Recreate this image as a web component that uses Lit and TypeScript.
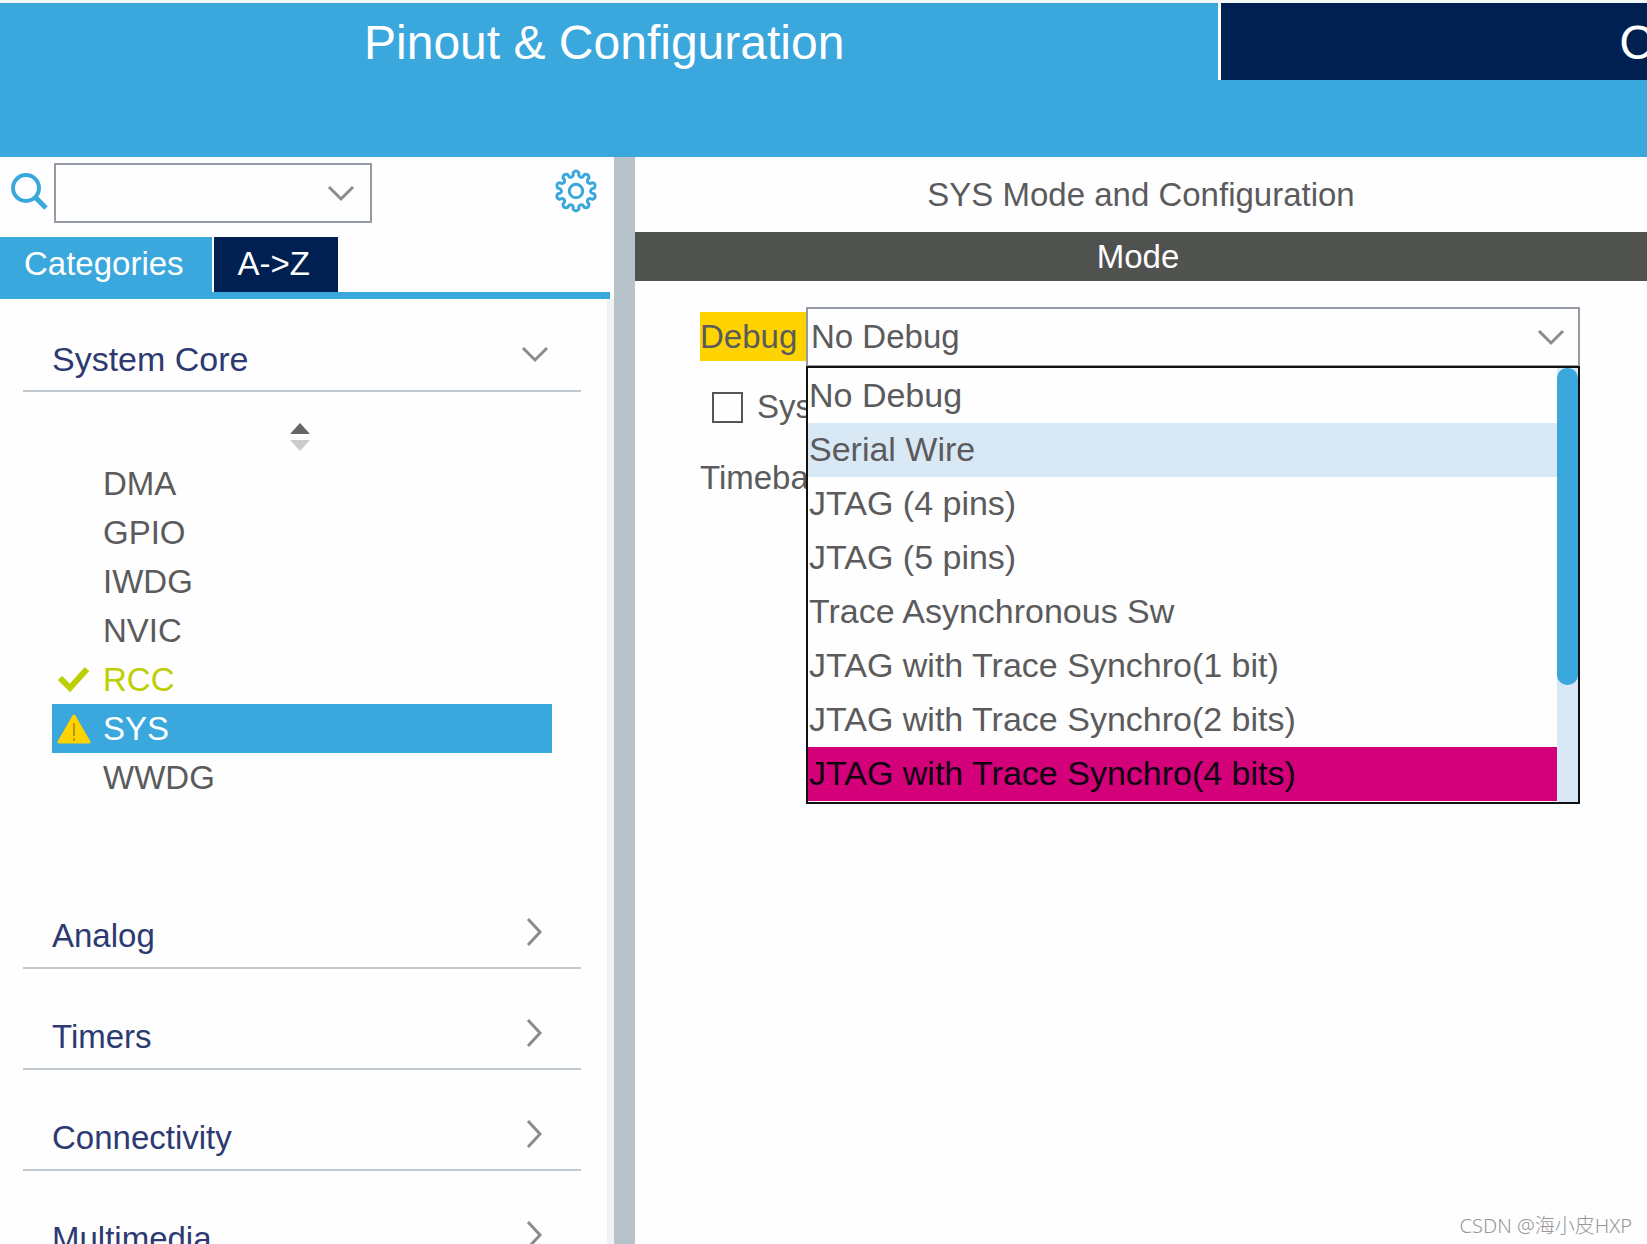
import { LitElement, html, css, svg, nothing } from "lit";
import { customElement, state } from "lit/decorators.js";
import { classMap } from "lit/directives/class-map.js";

type Peripheral = { name: string; status?: "ok" | "warning" };

const PERIPHERALS: Peripheral[] = [
  { name: "DMA" },
  { name: "GPIO" },
  { name: "IWDG" },
  { name: "NVIC" },
  { name: "RCC", status: "ok" },
  { name: "SYS", status: "warning" },
  { name: "WWDG" },
];

const GROUPS = ["Analog", "Timers", "Connectivity", "Multimedia"];

const DEBUG_MODES = [
  "No Debug",
  "Serial Wire",
  "JTAG (4 pins)",
  "JTAG (5 pins)",
  "Trace Asynchronous Sw",
  "JTAG with Trace Synchro(1 bit)",
  "JTAG with Trace Synchro(2 bits)",
  "JTAG with Trace Synchro(4 bits)",
];

const HOVERED_MODE = "Serial Wire";
const CONFLICT_MODE = "JTAG with Trace Synchro(4 bits)";

/** Outline of a cog with the given number of teeth, centred on 22,22. */
function cogPath(teeth: number): string {
  const step = (Math.PI * 2) / teeth;
  const at = (radius: number, angle: number) =>
    `${(22 + radius * Math.sin(angle)).toFixed(2)} ${(22 - radius * Math.cos(angle)).toFixed(2)}`;
  let d = "";
  for (let i = 0; i < teeth; i++) {
    const a = i * step;
    d += `${i ? "L" : "M"}${at(18.6, a - step * 0.24)}`;
    d += `Q${at(21.6, a)} ${at(18.6, a + step * 0.24)}`;
    d += `L${at(16, a + step * 0.28)}`;
    d += `Q${at(13.2, a + step * 0.5)} ${at(16, a + step * 0.72)}`;
  }
  return d + "Z";
}

const chevronDown = svg`<path d="M2 2 L14 14 L26 2" />`;
const chevronRight = svg`<path d="M2 2 L14 15 L2 28" />`;

@customElement("app-root")
export class AppRoot extends LitElement {
  @state() private selected = "SYS";
  @state() private mode = DEBUG_MODES[0];

  static styles = css`
    :host {
      display: block;
      font-family: "Liberation Sans", Arial, sans-serif;
      font-size: 33px;
      color: #5b5b5d;
      background: #fefefe;
    }
    * {
      box-sizing: border-box;
    }
    button,
    select {
      font: inherit;
      color: inherit;
      border: 0;
      margin: 0;
      padding: 0;
      background: none;
      border-radius: 0;
      text-align: left;
    }
    ul {
      list-style: none;
      margin: 0;
      padding: 0;
    }
    h1,
    h2 {
      margin: 0;
      font-size: inherit;
      font-weight: 400;
    }
    svg {
      display: block;
      fill: none;
    }
    .page {
      position: relative;
      display: flex;
      flex-direction: column;
      height: 100vh;
      overflow: hidden;
    }
    .header {
      flex: none;
      padding-bottom: 77px;
      background: #3aa8dc;
      border-top: 3px solid #f3f8fb;
    }
    .main-tabs {
      display: flex;
    }
    .main-tab {
      flex: 1218 1 0;
      min-width: 0;
      height: 77px;
      padding: 2px 10px 0 0;
      overflow: hidden;
      font-size: 48px;
      line-height: 75px;
      text-align: center;
      white-space: nowrap;
      color: #ffffff;
    }
    .main-tab.dark {
      flex-grow: 429;
      padding-right: 0;
      text-align: right;
      background: #002052;
      border-left: 3px solid #ffffff;
    }
    .cut {
      display: block;
      margin-right: -7px;
    }
    .body {
      flex: 1;
      min-height: 0;
      display: grid;
      grid-template-columns: minmax(0, 614fr) 21px minmax(0, 1012fr);
    }
    .splitter {
      background: #b7c3ca;
    }
    .side {
      display: flex;
      flex-direction: column;
      min-height: 0;
      overflow: hidden;
    }
    .search {
      flex: none;
      display: flex;
      align-items: center;
      height: 80px;
      padding: 0 16px 12px 10px;
    }
    .lens {
      flex: none;
      width: 38px;
      height: 38px;
      margin-right: 6px;
      stroke: #3aa8dc;
      stroke-width: 4;
    }
    .combo {
      display: grid;
      align-items: center;
    }
    .combo > * {
      grid-area: 1 / 1;
    }
    .combo select {
      appearance: none;
      width: 100%;
      height: 60px;
      padding: 0 0 2px 3px;
      border: 2px solid #959ba2;
      background: #fefefe;
    }
    .combo svg {
      justify-self: end;
      pointer-events: none;
    }
    .search .combo {
      flex: 0 1 318px;
      min-width: 0;
      padding-top: 4px;
    }
    .chevron {
      stroke: #8b8b8b;
      stroke-width: 3;
    }
    .search .combo svg {
      margin-right: 17px;
    }
    .gear {
      margin-left: auto;
      stroke: #3aa8dc;
      stroke-width: 3;
      stroke-linejoin: round;
    }
    .side-tabs {
      flex: none;
      display: flex;
      gap: 2px;
      height: 62px;
      margin-right: 4px;
      border-bottom: 7px solid #3aa8dc;
    }
    .side-tab {
      padding: 0 28px 2px 24px;
      color: #ffffff;
      background: #3aa8dc;
      white-space: nowrap;
    }
    .side-tab.dark {
      background: #002052;
    }
    .tree {
      flex: 1;
      min-height: 0;
      overflow: hidden;
      padding: 15px 26px 0 23px;
      border-right: 7px solid #f0f2f4;
    }
    .group {
      display: flex;
      align-items: flex-end;
      justify-content: space-between;
      width: 100%;
      height: 78px;
      padding: 0 32px 12px 29px;
      font-size: 34px;
      line-height: 38px;
      color: #2d3a72;
      border-bottom: 2px solid #bfc9cf;
    }
    .group.next {
      height: 101px;
      font-size: 33px;
    }
    .group .chevron {
      margin-bottom: 15px;
    }
    .group.next .chevron {
      margin: 0 6px 8px 0;
    }
    .sorter {
      display: block;
      margin: 31px auto 8px 266px;
    }
    .items {
      margin: 0 29px 66px 29px;
    }
    .item {
      display: grid;
      grid-template-columns: 51px 1fr;
      align-items: center;
      width: 100%;
      height: 49px;
    }
    .item svg {
      margin-left: 5px;
    }
    .item.ok {
      color: #bccf00;
    }
    .item.selected {
      color: #ffffff;
      background: #3aa8dc;
    }
    .title {
      height: 75px;
      line-height: 75px;
      text-align: center;
    }
    .mode-bar {
      height: 49px;
      padding-right: 6px;
      line-height: 49px;
      text-align: center;
      color: #ffffff;
      background: #50524f;
    }
    .form {
      padding: 26px 67px 0 65px;
    }
    .field {
      position: relative;
      display: flex;
      align-items: center;
    }
    .debug-label {
      flex: none;
      width: 106px;
      line-height: 49px;
      margin-bottom: 2px;
      background: #ffd300;
    }
    .field .combo {
      flex: 1;
      min-width: 0;
    }
    .field .combo svg {
      margin-right: 15px;
    }
    .popup {
      position: absolute;
      top: 59px;
      left: 106px;
      right: 0;
      display: flex;
      background: #fefefe;
      border: 2px solid #111111;
      z-index: 1;
    }
    .options {
      flex: 1;
      min-width: 0;
      padding: 1px 0;
      font-size: 34px;
    }
    .option {
      display: block;
      width: 100%;
      height: 54px;
      padding: 0 0 1px 1px;
      white-space: nowrap;
      overflow: hidden;
    }
    .option.hovered {
      background: #d9e8f5;
    }
    .option.conflict {
      color: #0d0010;
      background: #d4007a;
    }
    .track {
      flex: none;
      width: 21px;
      background: #d9e8f5;
    }
    .thumb {
      height: 73%;
      border-radius: 10px;
      background: #3aa8dc;
    }
    .check-row {
      display: flex;
      align-items: center;
      gap: 14px;
      padding: 20px 0 0 12px;
      line-height: 40px;
    }
    .check-row input {
      appearance: none;
      width: 31px;
      height: 31px;
      margin: 0;
      border: 2px solid #555555;
      background: #fefefe;
    }
    .timebase {
      padding-top: 31px;
      line-height: 40px;
    }
    .watermark {
      position: absolute;
      right: 15px;
      bottom: 4px;
      font-family: "Noto Sans", "Noto Sans CJK SC", sans-serif;
      font-size: 20px;
      font-weight: 300;
      line-height: 28px;
      color: #979797;
    }
  `;

  private statusIcon(p: Peripheral) {
    if (p.status === "ok") {
      return html`<svg width="33" height="28" viewBox="0 0 33 28" aria-hidden="true">
        <path d="M3 12 L13 22 L30 3" stroke="#bccf00" stroke-width="6" />
      </svg>`;
    }
    if (p.status === "warning") {
      return html`<svg width="34" height="30" viewBox="0 0 34 30" aria-hidden="true">
        <path d="M17 2 L32 28 H2 Z" fill="#ffd300" stroke="#ffd300" stroke-width="3" stroke-linejoin="round" />
        <path d="M17 9 V22 M17 24 V27" stroke="#b8961a" stroke-width="2" />
      </svg>`;
    }
    return html`<span></span>`;
  }

  render() {
    return html`
      <div class="page">
        <header class="header">
          <nav class="main-tabs">
            <button class="main-tab">Pinout &amp; Configuration</button>
            <button class="main-tab dark"><span class="cut">C</span></button>
          </nav>
        </header>
        <div class="body">
          <aside class="side">
            <div class="search">
              <svg class="lens" viewBox="0 0 38 38" aria-hidden="true">
                <circle cx="16" cy="16" r="13" />
                <path d="M25 25 L36 36" stroke-width="5" />
              </svg>
              <div class="combo">
                <select aria-label="Search"><option></option></select>
                <svg class="chevron" width="28" height="17" viewBox="0 0 28 17">${chevronDown}</svg>
              </div>
              <button class="gear" aria-label="Settings">
                <svg width="44" height="44" viewBox="0 0 44 44">
                  <path d=${cogPath(10)} />
                  <circle cx="22" cy="22" r="6.7" />
                </svg>
              </button>
            </div>
            <div class="side-tabs">
              <button class="side-tab">Categories</button>
              <button class="side-tab dark">A-&gt;Z</button>
            </div>
            <div class="tree">
              <button class="group" aria-expanded="true">
                System Core
                <svg class="chevron" width="28" height="17" viewBox="0 0 28 17">${chevronDown}</svg>
              </button>
              <button class="sorter" aria-label="Sort">
                <svg width="22" height="28" viewBox="0 0 22 28">
                  <path d="M11 0 L21 11 H1 Z" fill="#666666" />
                  <path d="M1 17 H21 L11 28 Z" fill="#cccccc" />
                </svg>
              </button>
              <ul class="items">
                ${PERIPHERALS.map(
                  (p) => html`<li>
                    <button
                      class=${classMap({
                        item: true,
                        ok: p.status === "ok",
                        selected: p.name === this.selected,
                      })}
                      @click=${() => (this.selected = p.name)}
                    >
                      ${this.statusIcon(p)}<span>${p.name}</span>
                    </button>
                  </li>`
                )}
              </ul>
              ${GROUPS.map(
                (g) => html`<button class="group next" aria-expanded="false">
                  ${g}
                  <svg class="chevron" width="17" height="30" viewBox="0 0 17 30">${chevronRight}</svg>
                </button>`
              )}
            </div>
          </aside>
          <div class="splitter"></div>
          <main>
            <h1 class="title">SYS Mode and Configuration</h1>
            <h2 class="mode-bar">Mode</h2>
            <div class="form">
              <div class="field">
                <label class="debug-label" for="debug">Debug</label>
                <div class="combo">
                  <select
                    id="debug"
                    .value=${this.mode}
                    @change=${(e: Event) => (this.mode = (e.target as HTMLSelectElement).value)}
                  >
                    ${DEBUG_MODES.map((m) => html`<option ?selected=${m === this.mode}>${m}</option>`)}
                  </select>
                  <svg class="chevron" width="28" height="17" viewBox="0 0 28 17">${chevronDown}</svg>
                </div>
                <div class="popup">
                  <div class="options" role="listbox" aria-label="Debug">
                    ${DEBUG_MODES.map(
                      (m) => html`<button
                        role="option"
                        aria-selected=${m === this.mode ? "true" : nothing}
                        class=${classMap({
                          option: true,
                          hovered: m === HOVERED_MODE,
                          conflict: m === CONFLICT_MODE,
                        })}
                        @click=${() => (this.mode = m)}
                      >
                        ${m}
                      </button>`
                    )}
                  </div>
                  <div class="track"><div class="thumb"></div></div>
                </div>
              </div>
              <label class="check-row"><input type="checkbox" />Sys</label>
              <div class="timebase">Timeba</div>
            </div>
          </main>
        </div>
        <div class="watermark">CSDN @海小皮HXP</div>
      </div>
    `;
  }
}
